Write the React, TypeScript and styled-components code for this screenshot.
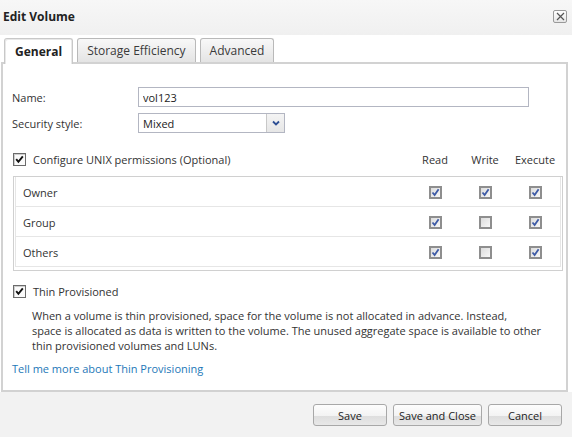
import styled, { createGlobalStyle } from "styled-components";

const GlobalStyle = createGlobalStyle`
    html, body {
        margin: 0;
        padding: 0;
        background: #ffffff;
    }
    body {
        font-family: "Open Sans", "Noto Sans", sans-serif;
        font-size: 11px;
        color: #333333;
    }
`;

const Dialog = styled.div`
    width: 572px;
    height: 437px;
    display: flex;
    flex-direction: column;
    background: #ffffff;
    overflow: hidden;
`;

const TitleBar = styled.div`
    height: 35px;
    flex: none;
    display: flex;
    align-items: center;
    justify-content: space-between;
    padding: 0 3px 0 3px;
    box-sizing: border-box;
    background: linear-gradient(#f7f7f7, #f0f0f0);
`;

const Title = styled.div`
    font-weight: 700;
    font-size: 12px;
    color: #222222;
    margin-top: -2px;
`;

const CloseButton = styled.button`
    width: 14px;
    height: 13px;
    padding: 0;
    margin: -3px 2px 0 0;
    display: flex;
    align-items: center;
    justify-content: center;
    border: 1px solid #9a9a9a;
    border-radius: 2px;
    background: linear-gradient(#ffffff, #e6e6e6);
`;

const TabBar = styled.div`
    display: flex;
    align-items: flex-end;
    gap: 4px;
    padding: 2px 0 0 4px;
    height: 27px;
    box-sizing: border-box;
    flex: none;
`;

const Tab = styled.div<{ $active?: boolean }>`
    height: ${p => (p.$active ? "26px" : "24px")};
    box-sizing: border-box;
    padding: 0 ${p => (p.$active ? "10px" : "9px")};
    display: flex;
    align-items: center;
    font-size: 12px;
    font-weight: ${p => (p.$active ? 700 : 400)};
    color: ${p => (p.$active ? "#222222" : "#3a3a3a")};
    border: 1px solid ${p => (p.$active ? "#c8c8c8" : "#b9b9b9")};
    border-bottom: none;
    border-radius: 3px 3px 0 0;
    background: ${p => (p.$active ? "#ffffff" : "linear-gradient(#f8f8f8, #e4e4e4)")};
    box-shadow: ${p => (p.$active ? "inset 1px 1px 0 #e8e8e8, inset -1px 0 0 #e8e8e8" : "none")};
    margin-bottom: ${p => (p.$active ? "-2px" : "0")};
    position: relative;
    z-index: ${p => (p.$active ? 1 : 0)};
`;

const Panel = styled.div`
    flex: 1;
    margin: 0 4px 0 1px;
    border: 2px solid #d2d2d2;
    padding: 23px 3px 0 10px;
    display: flex;
    flex-direction: column;
`;

const FormGrid = styled.div`
    display: grid;
    grid-template-columns: 125px 391px;
    row-gap: 6px;
    align-items: center;
`;

const Label = styled.div`
    font-size: 11px;
    margin-left: -1px;
`;

const TextInput = styled.input`
    height: 20px;
    box-sizing: border-box;
    border: 1px solid #b3b6c2;
    padding: 0 4px;
    font-family: inherit;
    font-size: 11px;
    color: #222222;
    outline: none;
`;

const Select = styled.div`
    width: 147px;
    height: 20px;
    box-sizing: border-box;
    border: 1px solid #b3b6c2;
    display: flex;
    align-items: stretch;
`;

const SelectValue = styled.div`
    flex: 1;
    display: flex;
    align-items: center;
    padding-left: 4px;
    font-size: 11px;
    color: #222222;
`;

const SelectArrow = styled.div`
    width: 17px;
    border-left: 1px solid #c8c8c8;
    background: linear-gradient(#f4f4f4, #e6e6e6);
    display: flex;
    align-items: center;
    justify-content: center;
`;

const PermHeader = styled.div`
    display: grid;
    grid-template-columns: 1fr 50px 50px 50px;
    align-items: center;
    margin-top: 19px;
    padding-right: 3px;
    height: 14px;
`;

const CheckLine = styled.label`
    display: flex;
    align-items: center;
    gap: 7px;
    font-size: 11px;
`;

const ColHead = styled.div`
    text-align: center;
    font-size: 11px;
`;

const PermTable = styled.div`
    margin-top: 10px;
    border: 1px solid #d0d0d0;
    padding: 0 1px 3px 1px;
`;

const PermRow = styled.div`
    display: grid;
    grid-template-columns: 1fr 50px 50px 50px;
    align-items: center;
    height: 30px;
    box-sizing: border-box;
    border-bottom: 1px solid #e6e6e6;
    border-left: 1px solid #e6e6e6;
    border-right: 1px solid #e6e6e6;
    padding: 1px 0 0 7px;
`;

const RowLabel = styled.div`
    font-size: 11px;
`;

const Cell = styled.div`
    display: flex;
    justify-content: center;
`;

const Box = styled.span<{ $dark?: boolean }>`
    width: 13px;
    height: 13px;
    box-sizing: border-box;
    display: inline-flex;
    align-items: center;
    justify-content: center;
    border: ${p => (p.$dark ? "1px solid #6b6b6b" : "2px solid #8e8e8e")};
    background: ${p => (p.$dark ? "#fbfbfb" : "linear-gradient(135deg, #dcdcdc, #f8f8f8)")};
    box-shadow: ${p => (p.$dark ? "inset 1px 1px 0 #cfcfcf" : "none")};
    flex: none;
`;

const ThinLine = styled(CheckLine)`
    margin-top: 13px;
`;

const Description = styled.p`
    margin: 9px 0 0 19px;
    font-size: 11px;
    line-height: 15px;
    color: #333333;
    white-space: nowrap;
`;

const MoreLink = styled.a`
    display: block;
    margin-top: 8px;
    margin-left: -1px;
    font-size: 11px;
    color: #1d78b8;
    text-decoration: none;
`;

const Footer = styled.div`
    height: 45px;
    flex: none;
    background: #f2f2f2;
    display: flex;
    justify-content: flex-end;
    align-items: flex-start;
    gap: 6px;
    padding: 12px 10px 0 0;
    box-sizing: border-box;
`;

const Button = styled.button<{ $w: number }>`
    width: ${p => p.$w}px;
    height: 22px;
    border: 1px solid #a8a8a8;
    border-radius: 3px;
    background: linear-gradient(#fdfdfd 0%, #f3f3f3 55%, #dedede 56%, #e8e8e8 100%);
    font-family: inherit;
    font-size: 11px;
    color: #222222;
    padding: 0;
`;

function BlueCheck() {
    return (
        <svg width="9" height="9" viewBox="0 0 9 9">
            <path d="M1.5 4.5 L3.6 7 L7.6 1.2" stroke="#3d5aa6" strokeWidth="1.8" fill="none" />
        </svg>
    );
}

function DarkCheck() {
    return (
        <svg width="9" height="9" viewBox="0 0 9 9">
            <path d="M1.2 4.2 L3.4 6.8 L7.8 1.4" stroke="#111111" strokeWidth="1.9" fill="none" />
        </svg>
    );
}

function GrayBox({ checked }: { checked: boolean }) {
    return <Box>{checked ? <BlueCheck /> : null}</Box>;
}

const rows = [
    { name: "Owner", perms: [true, true, true] },
    { name: "Group", perms: [true, false, true] },
    { name: "Others", perms: [true, false, true] },
];

function App() {
    return (
        <>
            <GlobalStyle />
            <Dialog>
                <TitleBar>
                    <Title>Edit Volume</Title>
                    <CloseButton>
                        <svg width="9" height="9" viewBox="0 0 9 9">
                            <path d="M1 1 L8 8 M8 1 L1 8" stroke="#555555" strokeWidth="1.2" />
                        </svg>
                    </CloseButton>
                </TitleBar>
                <TabBar>
                    <Tab $active>General</Tab>
                    <Tab>Storage Efficiency</Tab>
                    <Tab>Advanced</Tab>
                </TabBar>
                <Panel>
                    <FormGrid>
                        <Label>Name:</Label>
                        <TextInput defaultValue="vol123" />
                        <Label>Security style:</Label>
                        <Select>
                            <SelectValue>Mixed</SelectValue>
                            <SelectArrow>
                                <svg width="8" height="6" viewBox="0 0 8 6">
                                    <path d="M1 1.5 L4 4.5 L7 1.5" stroke="#2e4f94" strokeWidth="1.8" fill="none" />
                                </svg>
                            </SelectArrow>
                        </Select>
                    </FormGrid>
                    <PermHeader>
                        <CheckLine>
                            <Box $dark><DarkCheck /></Box>
                            Configure UNIX permissions (Optional)
                        </CheckLine>
                        <ColHead>Read</ColHead>
                        <ColHead>Write</ColHead>
                        <ColHead>Execute</ColHead>
                    </PermHeader>
                    <PermTable>
                        {rows.map(r => (
                            <PermRow key={r.name}>
                                <RowLabel>{r.name}</RowLabel>
                                {r.perms.map((p, i) => (
                                    <Cell key={i}>
                                        <GrayBox checked={p} />
                                    </Cell>
                                ))}
                            </PermRow>
                        ))}
                    </PermTable>
                    <ThinLine>
                        <Box $dark><DarkCheck /></Box>
                        Thin Provisioned
                    </ThinLine>
                    <Description>
                        When a volume is thin provisioned, space for the volume is not allocated in advance. Instead,
                        <br />
                        space is allocated as data is written to the volume. The unused aggregate space is available to other
                        <br />
                        thin provisioned volumes and LUNs.
                    </Description>
                    <MoreLink href="#">Tell me more about Thin Provisioning</MoreLink>
                </Panel>
                <Footer>
                    <Button $w={74}>Save</Button>
                    <Button $w={89}>Save and Close</Button>
                    <Button $w={74}>Cancel</Button>
                </Footer>
            </Dialog>
        </>
    );
}

export default App;
